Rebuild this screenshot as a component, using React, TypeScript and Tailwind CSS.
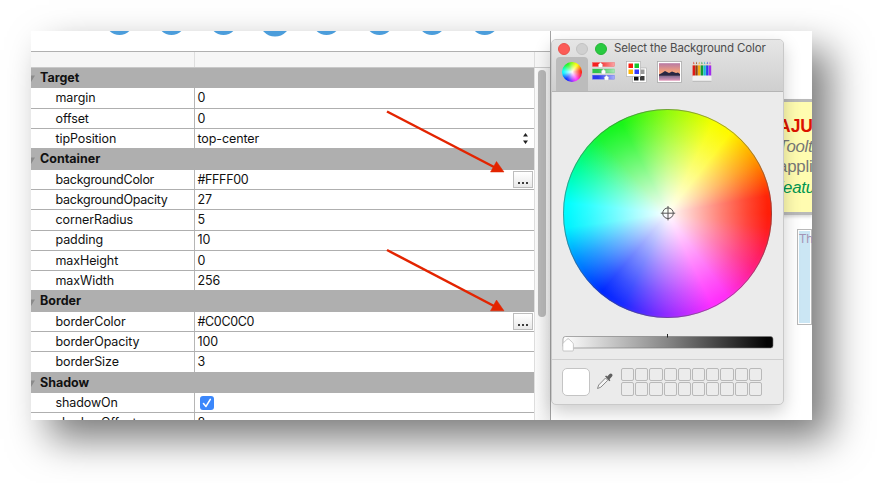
import React from "react";

type Kind = "group" | "text" | "select" | "color" | "check";
type Row = { name: string; value?: string; kind: Kind };

const ROWS: Row[] = [
  { name: "Target", kind: "group" },
  { name: "margin", value: "0", kind: "text" },
  { name: "offset", value: "0", kind: "text" },
  { name: "tipPosition", value: "top-center", kind: "select" },
  { name: "Container", kind: "group" },
  { name: "backgroundColor", value: "#FFFF00", kind: "color" },
  { name: "backgroundOpacity", value: "27", kind: "text" },
  { name: "cornerRadius", value: "5", kind: "text" },
  { name: "padding", value: "10", kind: "text" },
  { name: "maxHeight", value: "0", kind: "text" },
  { name: "maxWidth", value: "256", kind: "text" },
  { name: "Border", kind: "group" },
  { name: "borderColor", value: "#C0C0C0", kind: "color" },
  { name: "borderOpacity", value: "100", kind: "text" },
  { name: "borderSize", value: "3", kind: "text" },
  { name: "Shadow", kind: "group" },
  { name: "shadowOn", kind: "check" },
  { name: "shadowOffset", value: "8", kind: "text" },
];

function PropertyRow({ row }: { row: Row }) {
  if (row.kind === "group") {
    return (
      <div className="flex h-[20.3px] shrink-0 items-center bg-[#afafaf] font-bold">
        <svg className="h-2 w-[9px] shrink-0" viewBox="0 0 9 8">
          <path d="M-4 1.5H4L0 8z" fill="#8b8b8b" />
        </svg>
        <span className="leading-none">{row.name}</span>
      </div>
    );
  }
  const tracking = row.name.length > 14 ? "tracking-[-0.26px]" : "tracking-[-0.1px]";
  return (
    <div className="flex h-[20.3px] shrink-0 border-b border-[#afafaf]">
      <div className={"flex w-[164px] shrink-0 items-center border-r border-[#b6b6b6] pt-px pl-[24.5px] leading-none " + tracking}>{row.name}</div>
      <div className="flex grow items-center pl-[2.5px] leading-none">
        {row.kind === "check" ? (
          <span className="ml-[2px] flex size-[14px] items-center justify-center rounded-[3px] bg-[#3b87fb]">
            <svg className="size-[10px]" viewBox="0 0 10 10" fill="none" stroke="white" strokeWidth="1.6" strokeLinecap="round" strokeLinejoin="round">
              <path d="M1.5 5.5L4 8.4L8.3 1.4" />
            </svg>
          </span>
        ) : (
          <span className={row.kind === "color" ? "pt-px tracking-[-0.35px]" : "pt-px tracking-[-0.1px]"}>{row.value}</span>
        )}
        {row.kind === "select" && (
          <svg className="mr-[6px] ml-auto h-[11px] w-[5px]" viewBox="0 0 5 11" fill="#222">
            <path d="M0 3.5L2.5 0L5 3.5zM0 7.5L2.5 11L5 7.5z" />
          </svg>
        )}
        {row.kind === "color" && (
          <span className="mr-px ml-auto flex h-[17px] w-[20px] items-center justify-center border border-[#bdbdbd] bg-linear-to-b from-white to-[#e9e9e9]">
            <svg className="mt-[7px] h-[2px] w-[10px]" viewBox="0 0 10 2" fill="#111">
              <path d="M.2 0h1.6v2H.2zM4.2 0h1.6v2H4.2zM8.2 0h1.6v2H8.2z" />
            </svg>
          </span>
        )}
      </div>
    </div>
  );
}

function SlidersIcon() {
  const bars = [
    { y: 1.5, color: "#f32020", knob: 8.5 },
    { y: 8, color: "#2fc34d", knob: 11.5 },
    { y: 14.2, color: "#2b39ee", knob: 14.5 },
  ];
  return (
    <svg className="h-[21px] w-[23px]" viewBox="0 0 23 21">
      <defs>
        {bars.map((b, i) => (
          <linearGradient id={"bar" + i} key={i}>
            <stop offset="0.25" stopColor={b.color} />
            <stop offset="1" stopColor={b.color} stopOpacity="0.4" />
          </linearGradient>
        ))}
      </defs>
      {bars.map((b, i) => (
        <g key={i}>
          <rect x="0.5" y={b.y} width="22" height="4" fill="white" />
          <rect x="0.5" y={b.y} width="22" height="4" fill={`url(#bar${i})`} stroke={b.color} strokeOpacity="0.5" strokeWidth="0.5" />
          <path d={`M${b.knob - 2} ${b.y + 5}v-3l2-2l2 2v3z`} fill="white" stroke="#bbb" strokeWidth="0.4" />
        </g>
      ))}
    </svg>
  );
}

function PaletteIcon() {
  return (
    <svg className="h-[22px] w-[21px]" viewBox="0 0 21 22">
      <rect x="6.5" y="7" width="14" height="14.5" fill="#fff" stroke="#aaa" strokeWidth="0.6" />
      <path d="M14 8.5h4.5v4.5H14z" fill="#999" />
      <path d="M8 15h4.5v4.5H8z" fill="#111" />
      <path d="M14 15h4.5v4.5H14z" fill="#3c3c3c" />
      <rect x="0.5" y="0.5" width="14" height="15" fill="#fff" stroke="#aaa" strokeWidth="0.6" />
      <path d="M2.5 2.5H7V7H2.5z" fill="#fa1c0e" />
      <path d="M8.5 2.5H13V7H8.5z" fill="#16c72f" />
      <path d="M2.5 8.5H7V13H2.5z" fill="#ffb700" />
      <path d="M8.5 8.5H13V13H8.5z" fill="#353cfb" />
    </svg>
  );
}

function PictureIcon() {
  return (
    <svg className="h-[22px] w-[25px]" viewBox="0 0 25 22">
      <defs>
        <linearGradient id="sunset" x2="0" y2="1">
          <stop stopColor="#b77aa5" />
          <stop offset="0.5" stopColor="#f6a27b" />
          <stop offset="0.62" stopColor="#efb28d" />
          <stop offset="0.75" stopColor="#8b7094" />
          <stop offset="1" stopColor="#e299ba" />
        </linearGradient>
      </defs>
      <rect x="0.5" y="0.5" width="24" height="21" fill="white" stroke="#aaa" strokeWidth="0.8" />
      <rect x="2" y="2.2" width="21" height="17.5" fill="url(#sunset)" />
      <path d="M2 13.5L5 12L8 10L12 12L15 10.5L19 12L21 11.5L23 13V14.8H2z" fill="#282743" />
    </svg>
  );
}

function PencilsIcon() {
  const colors = ["#e01914", "#92410c", "#f3aa10", "#119b31", "#18bdd2", "#2942ee", "#a22bed"];
  return (
    <svg className="h-[21px] w-[20px]" viewBox="0 0 20 21">
      {colors.map((c, i) => (
        <g key={c}>
          <path d={`M${0.6 + i * 2.7} 5l1.2-4l1.2 4z`} fill="#ead4b8" />
          <path d={`M${1.2 + i * 2.7} 2.8l.6-2.4l.6 2.4z`} fill={c} />
          <rect x={0.6 + i * 2.7} y="4.4" width="2.4" height="11" fill={c} />
        </g>
      ))}
      <rect x="0.5" y="14.5" width="19" height="6" fill="#f2f2f2" />
      <path d="M0.5 20.3h19" stroke="#aaa" strokeWidth="0.8" />
    </svg>
  );
}

function Wheel({ className }: { className: string }) {
  return (
    <div
      className={
        "rounded-full bg-[radial-gradient(circle_closest-side,#fff_0%,rgba(255,255,255,0.76)_22%,rgba(255,255,255,0.45)_50%,rgba(255,255,255,0.18)_76%,rgba(255,255,255,0)_96%),conic-gradient(from_90deg,#ff1e08_0deg,#ff1e18_8deg,#ff2080_32deg,#ff30f4_54deg,#ff30ff_64deg,#8a2cff_92deg,#1a2cff_116deg,#0028ff_130deg,#0090ff_153deg,#00f4ff_172deg,#00ffff_186deg,#00ffa0_206deg,#18f630_228deg,#18f618_243deg,#90fb10_270deg,#f6ff00_297deg,#fff800_308deg,#ff9000_330deg,#ff2408_350deg,#ff1e08_360deg)] " +
        className
      }
    />
  );
}

function ColorPanel() {
  return (
    <div className="absolute top-[8px] left-[520px] flex h-[366px] w-[233px] flex-col overflow-hidden rounded-[5px] border border-[#c9c9c9] bg-[#ebebeb] shadow-[0_7px_18px_rgba(0,0,0,0.2)]">
      <div className="flex h-[52px] shrink-0 flex-col border-b border-[#b5b5b5] bg-linear-to-b from-[#e6e6e6] to-[#cfcfcf]">
        <div className="flex h-[17px] shrink-0 items-center gap-[6.3px] pl-[6px]">
          <span className="size-[12px] rounded-full border border-[#e9524b] bg-[#fc5b57]" />
          <span className="size-[12px] rounded-full border border-[#c2c2c2] bg-[#d0d0d0]" />
          <span className="size-[12px] rounded-full border border-[#26b637] bg-[#29ca41]" />
          <span className="pl-px text-[11.5px] leading-none tracking-[-0.14px] whitespace-nowrap text-[#4c4c4c]">Select the Background Color</span>
        </div>
        <div className="flex grow items-start pl-[4px]">
          <div className="flex h-full w-[32px] justify-center rounded-t-[4px] bg-[#bcbcbc] pt-[5px]">
            <Wheel className="size-[20px]" />
          </div>
          <div className="flex items-start pt-[4px] pl-[4px]">
            <SlidersIcon />
            <div className="ml-[11px]"><PaletteIcon /></div>
            <div className="ml-[10px]"><PictureIcon /></div>
            <div className="ml-[10px]"><PencilsIcon /></div>
          </div>
        </div>
      </div>
      <div className="flex h-[242px] shrink-0 pt-[17px] pl-[11px]">
        <div className="relative size-[209px]">
          <Wheel className="size-full" />
          <svg className="absolute inset-0 size-full" viewBox="0 0 209 209" fill="none" stroke="#555">
            <circle cx="104.5" cy="104.5" r="104" strokeOpacity="0.55" />
            <circle cx="105" cy="104.2" r="5.3" />
            <path d="M97.8 104.2h14.4M105 97v14.4" />
          </svg>
        </div>
      </div>
      <div className="flex h-[23px] shrink-0 pl-[10px]">
        <svg className="h-[18px] w-[213px]" viewBox="0 0 213 18">
          <defs>
            <linearGradient id="brightness">
              <stop stopColor="#fff" />
              <stop offset="0.5" stopColor="#858585" />
              <stop offset="0.97" stopColor="#030303" />
            </linearGradient>
          </defs>
          <rect x="1" y="2.5" width="210" height="11.5" rx="2.5" fill="url(#brightness)" stroke="#777" strokeOpacity="0.6" />
          <path d="M105.5 0v3.5" stroke="#222" />
          <path d="M0.8 16v-5.5q0-1 .8-1.8l3.5-3.5q1-1 2 0l3.5 3.5q.8.8.8 1.8V16q0 1-1 1H1.8q-1 0-1-1z" fill="white" stroke="#bbb" strokeWidth="0.8" />
        </svg>
      </div>
      <div className="mt-[2px] flex grow items-start border-t border-[#cfcfcf] pt-[8px] pl-[10px]">
        <div className="size-[28px] rounded-[5px] border border-[#c4c4c4] bg-white" />
        <svg className="mt-[4px] ml-[6px] size-[18px]" viewBox="0 0 18 18">
          <path d="M1.5 16.5l1.2-3.5L9.5 6l2.3 2.3l-7 6.9z" fill="#f5f5f5" stroke="#888" strokeLinejoin="round" />
          <path d="M9 4.3l1.2-.7l1 .9L13.6 2q1.2-1 2.4.1t0 2.5l-2.5 2.6l.9 1.1l-1 1z" fill="#606060" />
        </svg>
        <div className="ml-[7px] grid grid-cols-10 gap-x-px gap-y-[1px]">
          {Array.from({ length: 20 }, (_, i) => (
            <span key={i} className="h-[13.4px] w-[13.2px] rounded-[2px] border border-[#b9b9b9] bg-[#ececec]" />
          ))}
        </div>
      </div>
    </div>
  );
}

export default function App() {
  return (
    <div className="h-[483px] w-[877px] overflow-hidden bg-white pt-[31px] pl-[31px] font-['Inter','Liberation_Sans',sans-serif] text-[12.5px] text-[#111]">
      <div className="h-[389px] w-[781px] shadow-[18px_19px_37px_rgba(0,0,0,0.52)]">
        <div className="relative flex h-full w-full overflow-hidden bg-white">
          <div className="flex w-[520px] shrink-0 flex-col border-r-[1.5px] border-[#a3a3a3]">
            <svg className="h-[20px] w-full shrink-0" viewBox="0 0 519 20" preserveAspectRatio="xMinYMin slice" fill="#4b9ddb">
              {[88.5, 140.5, 192.5, 295.5, 348.5, 401, 453.7].map((x) => (
                <circle key={x} cx={x} cy="-10.6" r="14.5" />
              ))}
              <circle cx="244" cy="-10" r="15.5" />
            </svg>
            <div className="flex h-[17.2px] shrink-0 border-t border-b border-t-[#b0b0b0] border-b-[#c8c8c8] bg-[#f6f6f6]">
              <div className="w-[164px] border-r border-[#dedede]" />
              <div className="w-[340px] border-r border-[#dedede]" />
            </div>
            <div className="flex min-h-0 grow">
              <div className="flex w-[503.5px] shrink-0 flex-col overflow-hidden border-r border-[#dedede]">
                {ROWS.map((r) => (
                  <PropertyRow key={r.name} row={r} />
                ))}
              </div>
              <div className="flex grow justify-center bg-linear-to-r from-[#fafafa] to-[#ececec] pt-[2px]">
                <div className="h-[247px] w-[8px] rounded-full bg-[#b7b7b7]" />
              </div>
            </div>
          </div>
          <div className="flex grow flex-col overflow-hidden pt-[68px] pl-[20px] font-['Liberation_Sans',Arial,sans-serif]">
            <div className="flex h-[116px] shrink-0 flex-col border-y-[3px] border-[#b9b9b9] bg-[#fffcb0] pt-[14px] pl-[207px] text-[16.8px] leading-[20.5px] whitespace-nowrap shadow-[0_2px_3px_rgba(0,0,0,0.15)]">
              <span className="text-[17.5px] font-bold text-[#dc1400]">AJUI</span>
              <span className="tracking-[-0.3px] text-[#777] italic">Tooltip</span>
              <span className="tracking-[-0.2px] text-[#777]">applica</span>
              <span className="-ml-[5px] tracking-[-0.2px] text-[#009650] italic">Features</span>
            </div>
            <div className="mt-[14px] ml-[226px] h-[96px] shrink-0 border border-[#b9b9b9] bg-white p-px">
              <div className="h-full bg-[#cbe6f4] pt-px text-[12px] leading-[15px] text-[#a494b5]">This</div>
            </div>
          </div>
          <ColorPanel />
          <svg className="absolute inset-0 h-full w-full" viewBox="0 0 781 389" stroke="#e32400" fill="#e32400">
            <path d="M356 80.5L463 136" strokeWidth="2.5" />
            <path d="M465.5 130.5L473 141H459.5z" strokeWidth="0.5" />
            <path d="M356 219L463 275" strokeWidth="2.5" />
            <path d="M465.5 269L473 279.8H459.5z" strokeWidth="0.5" />
          </svg>
        </div>
      </div>
    </div>
  );
}
